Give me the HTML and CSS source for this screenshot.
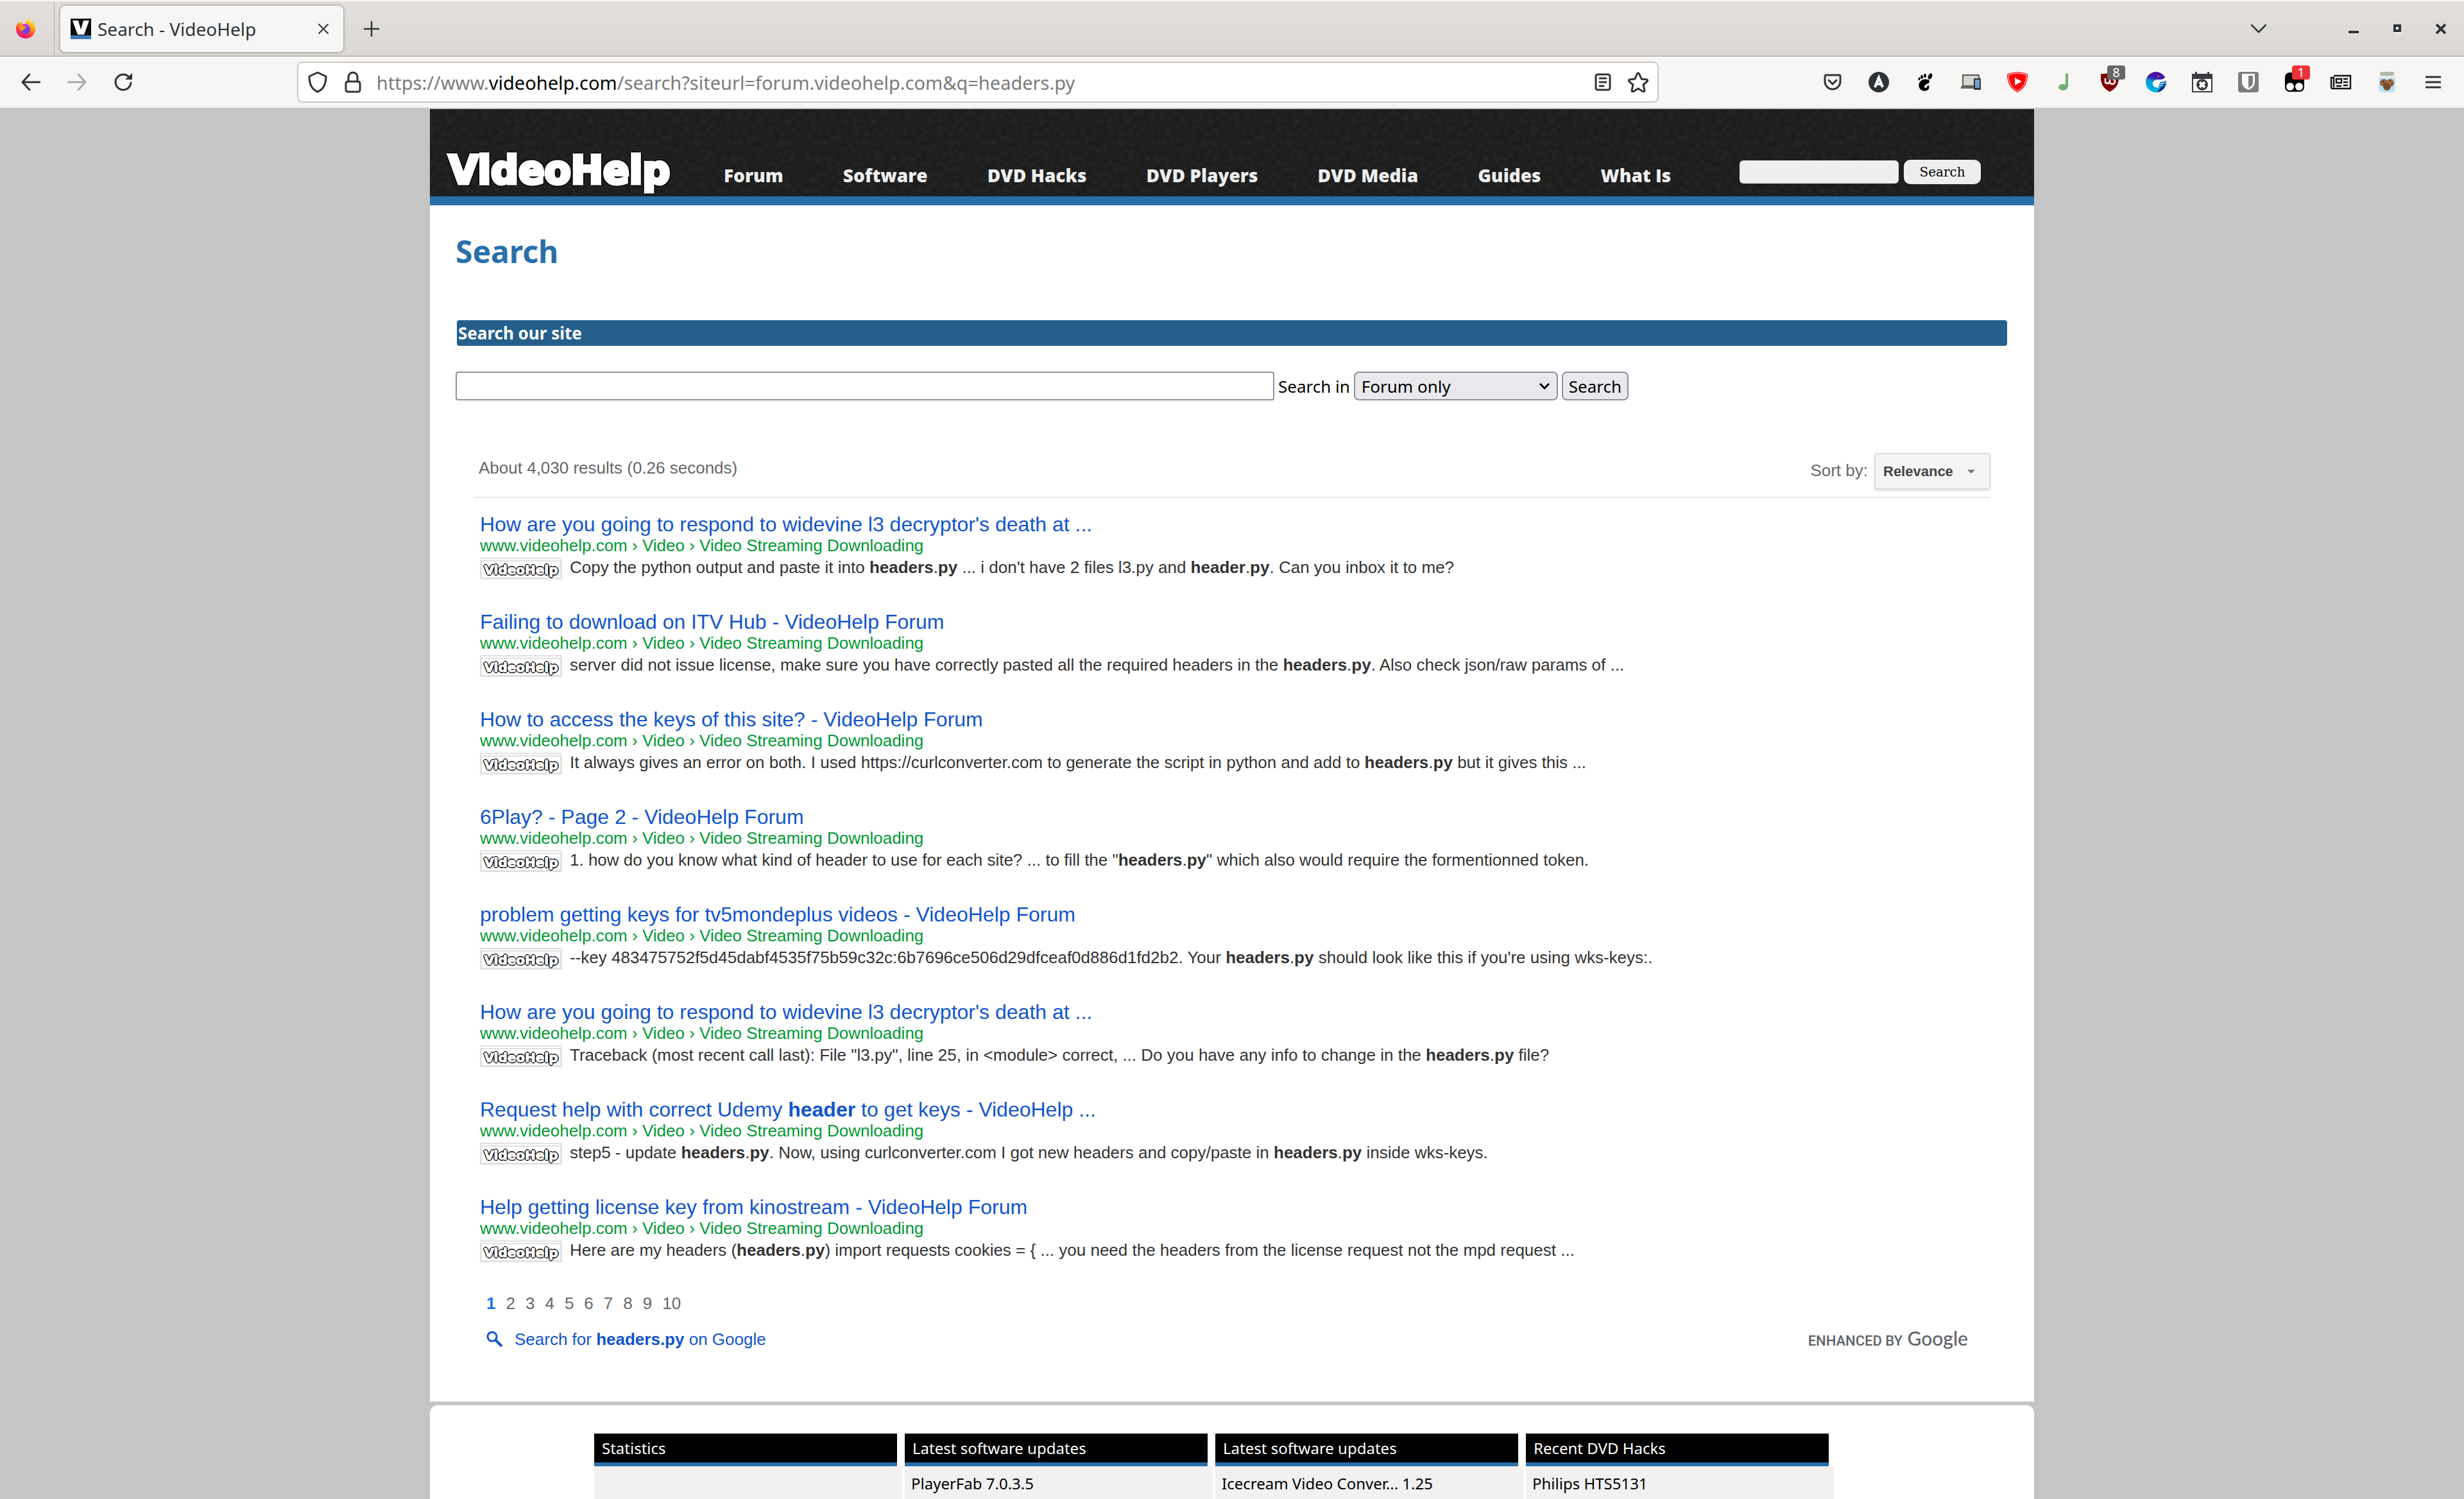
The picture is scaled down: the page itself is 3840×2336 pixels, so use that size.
FILE: index.html
```html
<!DOCTYPE html>
<html lang="en">
<head>
    <meta charset="UTF-8">
    <meta name="viewport" content="width=device-width, initial-scale=1">
    <title>Search - VideoHelp</title>
    <link rel="stylesheet" href="styles.css">
</head>
<body>
    <!-- Browser -->
    <div class="tabbar">
        <button class="pinned" aria-label="Firefox View">
            <svg width="32" height="32" viewBox="0 0 32 32">
                <defs>
                    <linearGradient id="fox" x1="0.8" y1="0" x2="0.3" y2="1">
                        <stop offset="0" stop-color="#fff44f"/>
                        <stop offset="0.4" stop-color="#ff980e"/>
                        <stop offset="0.7" stop-color="#ff3647"/>
                        <stop offset="1" stop-color="#e31587"/>
                    </linearGradient>
                </defs>
                <path fill="url(#fox)" d="M20 0c3 2 5 4 5 7 1-1 1-2 1-3 3 3 5 8 5 12 0 9-7 15-15 15S1 25 1 16c0-4 1-7 3-9l1-2 2 3 3-3c0 2 1 3 2 4l4-1c0-4 2-6 4-8z"/>
                <circle cx="16" cy="17" r="7" fill="#7542e5"/>
                <path fill="#c23bf0" d="M12 9c4-2 9 0 10 4-3-1-5 0-7 1-2 0-3-3-3-5z"/>
                <path fill="#ff9a1f" d="M5 12c3-3 6-1 9 1 2 0 3 0 3 1-1 2-4 1-5 4-1 2-3 1-4 0-2-2-3-4-3-6z"/>
            </svg>
        </button>
        <div class="tab">
            <svg width="32" height="32" viewBox="0 0 32 32">
                <path fill="#0c0c0c" d="M0 0h32v26H0z"/>
                <path fill="#3d7ab5" d="M0 26h32v6H0z"/>
                <path fill="#fff" d="M3 3h9l4 14 4-14h9l-8 22H11z"/>
            </svg>
            <span class="tab-title">Search - VideoHelp</span>
            <button class="tab-close" aria-label="Close tab">
                <svg width="16" height="16" viewBox="0 0 16 16"><path class="line thin" d="M1 1l14 14M15 1L1 15"/></svg>
            </button>
        </div>
        <button class="new-tab" aria-label="New tab">
            <svg width="24" height="24" viewBox="0 0 24 24"><path class="line" d="M12 0v24M0 12h24"/></svg>
        </button>
        <div class="window-controls">
            <button class="all-tabs" aria-label="List all tabs">
                <svg width="24" height="14" viewBox="0 0 24 14"><path class="line" d="M1 1l11 11L23 1"/></svg>
            </button>
            <button aria-label="Minimize">
                <svg width="16" height="16" viewBox="0 0 16 16"><path fill="#fff" d="M0 14h16v2H0z"/><path fill="#2e3436" d="M0 11h16v4H0z"/></svg>
            </button>
            <button aria-label="Maximize">
                <svg width="12" height="14" viewBox="0 0 12 14"><path fill="#fff" d="M0 2h12v12H0z"/><path fill="#2e3436" d="M0 0h12v12H0z"/><path fill="#fff" d="M4 4h4v4H4z"/></svg>
            </button>
            <button aria-label="Close">
                <svg width="16" height="16" viewBox="0 0 16 16"><path stroke="#2e3436" stroke-width="4" d="M1 1l14 14M15 1L1 15"/></svg>
            </button>
        </div>
    </div>

    <div class="toolbar">
        <button aria-label="Back">
            <svg width="30" height="26" viewBox="0 0 30 26"><path class="line wide" d="M13 1L2 13l11 12M2 13h27"/></svg>
        </button>
        <button class="disabled" aria-label="Forward" disabled>
            <svg width="30" height="26" viewBox="0 0 30 26"><path class="line wide" d="M17 1l11 12-11 12M28 13H1"/></svg>
        </button>
        <button aria-label="Reload">
            <svg width="30" height="30" viewBox="0 0 30 30"><path class="line wide" d="M27 16a12 12 0 1 1-4-10"/><path fill="#2e3436" d="M29 1v10H18z"/></svg>
        </button>
        <span class="spacer"></span>
        <div class="urlbar">
            <svg width="32" height="34" viewBox="0 0 32 34"><path class="line wide" d="M16 2l13 6c0 10-3 20-13 24C6 28 3 18 3 8z"/></svg>
            <svg class="lock" width="26" height="34" viewBox="0 0 26 34"><rect class="line wide" x="2" y="16" width="22" height="16" rx="3"/><path class="line wide" d="M6 16V9a7 7 0 0 1 14 0v7"/></svg>
            <div class="url" role="textbox" aria-label="Address" contenteditable="true" spellcheck="false">https://www.<b>videohelp.com</b>/search?siteurl=forum.videohelp.com&amp;q=headers.py</div>
            <svg width="26" height="28" viewBox="0 0 26 28"><rect class="line wide" x="2" y="2" width="22" height="24" rx="3"/><path class="line wide" d="M8 8h10M8 14h10M8 20h6"/></svg>
            <svg class="star" width="32" height="32" viewBox="0 0 32 32"><path class="line wide" d="M16 2c1 0 2 1 2 2l3 7 8 1c2 0 2 2 1 3l-6 5 2 9c0 2-1 2-2 2l-8-5-8 5c-1 0-2 0-2-2l2-9-6-5c-1-1-1-3 1-3l8-1 3-7c0-1 1-2 2-2z"/></svg>
        </div>
        <span class="spacer"></span>
        <button aria-label="Save to Pocket">
            <svg width="28" height="26" viewBox="0 0 28 26"><path class="line wide" d="M4 2h20q2 0 2 2v8a12 12 0 0 1-24 0V4q0-2 2-2zM8 10l6 6 6-6"/></svg>
        </button>
        <button aria-label="Account">
            <svg width="32" height="32" viewBox="0 0 32 32"><circle cx="16" cy="16" r="16" fill="#2e3436"/><path fill="none" stroke="#fff" stroke-width="4" d="M10 24l6-15 6 15M12 19h8"/></svg>
        </button>
        <button aria-label="GNOME Shell integration">
            <svg width="24" height="28" viewBox="0 0 24 28">
                <ellipse cx="20" cy="5" rx="3" ry="5" transform="rotate(25 20 5)"/>
                <ellipse cx="12" cy="4" rx="2" ry="3"/><ellipse cx="7" cy="6" rx="2" ry="3"/><ellipse cx="3" cy="9" rx="1.6" ry="2.4"/>
                <path d="M19 12c-2-3-8-3-12-1-5 3-6 9-3 13 3 5 12 5 14 0 1-3 0-5-1-5-2 0-1 4-4 4-2 0-3-2-1-4s8-3 7-7z"/>
            </svg>
        </button>
        <button aria-label="Responsive view">
            <svg width="32" height="24" viewBox="0 0 32 24"><path fill="#555753" d="M2 0h27v18h-4v4H0v-3l2-1z"/><path fill="#d3d7cf" d="M4 2h23v15H4z"/><path fill="#888a85" d="M2 19h18v1H2z"/><rect x="20" y="6" width="11" height="18" rx="1" fill="#2e3436"/><path fill="#729fcf" d="M22 8h7v13h-7z"/></svg>
        </button>
        <button aria-label="YouTube blocker">
            <svg width="32" height="32" viewBox="0 0 32 32"><path fill="#f00" d="M0 4C10-1 22-1 32 4c0 13-5 22-16 28C5 26 0 17 0 4z"/><path fill="none" stroke="#fff" stroke-width="1" d="M2 5C11 1 21 1 30 5c0 11-4 19-14 25C6 24 2 16 2 5z"/><path fill="#fff" d="M12 9l11 6-11 6z"/></svg>
        </button>
        <button aria-label="Music">
            <svg width="16" height="28" viewBox="0 0 16 28"><ellipse cx="7" cy="22" rx="7" ry="5" fill="#73b06f"/><path fill="#73b06f" d="M11 2q0-2 2-2t2 2v20h-4z"/></svg>
        </button>
        <button class="with-badge" aria-label="uBlock Origin">
            <svg width="28" height="30" viewBox="0 0 28 30"><path fill="#800000" d="M14 0c5 2 9 2 14 2 1 15-3 22-14 28C3 24-1 17 0 2c5 0 9 0 14-2z"/><path fill="none" stroke="#fff" stroke-width="2.6" d="M7 9v5q0 3 3 3t4-3V9v5a4 4 0 1 0 4-4"/></svg>
            <span class="badge">8</span>
        </button>
        <button aria-label="Translator">
            <svg width="32" height="32" viewBox="0 0 32 32">
                <defs><linearGradient id="wave" x1="0.6" y1="0" x2="0.4" y2="1"><stop offset="0" stop-color="#5a0a9a"/><stop offset="0.3" stop-color="#3a1fa8"/><stop offset="0.5" stop-color="#0a9fd0"/><stop offset="1" stop-color="#00b5e8"/></linearGradient></defs>
                <circle cx="16" cy="16" r="16" fill="url(#wave)"/>
                <path fill="#062a7a" d="M32 14c0 9-6 17-15 18 3-3 6-6 8-10z"/>
                <path fill="#f7f6f5" d="M11 20c-1-5 3-8 8-8 4 0 6 0 8-1l6-4v6c-1 4-4 7-8 9-3 3-6 3-9 2-3 0-4-2-5-4z"/>
                <path fill="none" stroke="#0b78c4" stroke-width="2" d="M32 14c-3 3-7 3-10 3M30 18c-3 2-6 2-9 2M28 22c-3 1-6 1-8 1"/>
                <circle cx="20" cy="7" r="1" fill="#d8c46a"/>
            </svg>
        </button>
        <button aria-label="Tab scheduler">
            <svg width="32" height="32" viewBox="0 0 32 32"><path fill="#3b3b3f" d="M0 3h5V0h3v3h16V0h3v3h5v29H0z"/><path fill="#fff" d="M2 11h28v19H2z"/><circle cx="16" cy="20" r="9" fill="#3b3b3f"/><path stroke="#fff" stroke-width="4" d="M12 16l8 8M20 16l-8 8"/></svg>
        </button>
        <button aria-label="Bitwarden">
            <svg width="32" height="32" viewBox="0 0 32 32"><rect width="32" height="32" rx="4" fill="#7d7d7d"/><path fill="#fff" d="M6 3h20v13c0 6-5 10-10 12-5-2-10-6-10-12z"/><path fill="#7d7d7d" d="M16 6h7v10c0 5-3 7-7 9z"/></svg>
        </button>
        <button class="with-badge" aria-label="Tampermonkey">
            <svg width="30" height="30" viewBox="0 0 30 30"><rect width="30" height="30" rx="7"/><circle cx="8" cy="22" r="6" fill="#fff"/><circle cx="22" cy="22" r="6" fill="#fff"/></svg>
            <span class="badge red">1</span>
        </button>
        <button aria-label="Reader">
            <svg width="34" height="24" viewBox="0 0 34 24"><path fill="none" stroke="#111" stroke-width="2.4" d="M6 2h26v20H4q-2 0-2-2V5h4v15M10 7h8v6h-8zM21 7h7M21 12h7M10 18h8M21 17h7"/></svg>
        </button>
        <button aria-label="Cookie manager">
            <svg width="28" height="32" viewBox="0 0 28 32"><rect x="1" y="6" width="26" height="26" rx="6" fill="#b9e3f2"/><rect x="3" y="0" width="22" height="6" rx="2" fill="#b4b9a9"/><path fill="#e3eeee" d="M4 6h20v4H4z"/><circle cx="9" cy="17" r="6" fill="#94613f"/><circle cx="19" cy="17" r="6" fill="#a06c47"/><circle cx="14" cy="23" r="6" fill="#80502f"/><path fill="#4e2c18" d="M7 14h2v2H7zM18 13h2v2h-2zM21 18h2v2h-2zM13 23h2v2h-2zM10 18h2v2h-2z"/></svg>
        </button>
        <button aria-label="Open menu">
            <svg width="24" height="20" viewBox="0 0 24 20"><path class="line wide" d="M1 2h22M1 10h22M1 18h22"/></svg>
        </button>
    </div>

    <!-- Site -->
    <header class="site-header">
        <a class="logo" href="#">VideoHelp</a>
        <nav class="site-nav">
            <a href="#">Forum</a>
            <a href="#">Software</a>
            <a href="#">DVD Hacks</a>
            <a href="#">DVD Players</a>
            <a href="#">DVD Media</a>
            <a href="#">Guides</a>
            <a href="#">What Is</a>
        </nav>
        <form class="header-search">
            <input type="text" aria-label="Search VideoHelp">
            <button type="button">Search</button>
        </form>
    </header>

    <main class="page">
        <h1>Search</h1>
        <h2>Search our site</h2>
        <form class="search-form">
            <input type="text" aria-label="Search terms">
            <label for="area">Search in</label>
            <span class="select-wrap">
                <select id="area">
                    <option>Forum only</option>
                    <option>Software only</option>
                </select>
                <svg width="16" height="10" viewBox="0 0 16 10"><path fill="none" stroke="#000" stroke-width="3" d="M1 1l7 7 7-7"/></svg>
            </span>
            <button type="button">Search</button>
        </form>

        <section class="results">
            <div class="results-info">
                <span class="count">About 4,030 results (0.26 seconds)</span>
                <span class="sort-label" id="sortLabel">Sort by:</span>
                <button class="sort" aria-describedby="sortLabel">Relevance <svg width="12" height="6" viewBox="0 0 12 6"><path fill="#777" d="M0 0h12L6 6z"/></svg></button>
            </div>
            <div class="result-list">
                <article>
                    <h3><a href="#">How are you going to respond to widevine l3 decryptor's death at ...</a></h3>
                    <p class="crumb">www.videohelp.com › Video › Video Streaming Downloading</p>
                    <div class="snippet"><span class="thumb">VideoHelp</span><p>Copy the python output and paste it into <b>headers</b>.<b>py</b> ... i don't have 2 files l3.py and <b>header</b>.<b>py</b>. Can you inbox it to me?</p></div>
                </article>
                <article>
                    <h3><a href="#">Failing to download on ITV Hub - VideoHelp Forum</a></h3>
                    <p class="crumb">www.videohelp.com › Video › Video Streaming Downloading</p>
                    <div class="snippet"><span class="thumb">VideoHelp</span><p>server did not issue license, make sure you have correctly pasted all the required headers in the <b>headers</b>.<b>py</b>. Also check json/raw params of ...</p></div>
                </article>
                <article>
                    <h3><a href="#">How to access the keys of this site? - VideoHelp Forum</a></h3>
                    <p class="crumb">www.videohelp.com › Video › Video Streaming Downloading</p>
                    <div class="snippet"><span class="thumb">VideoHelp</span><p>It always gives an error on both. I used https://curlconverter.com to generate the script in python and add to <b>headers</b>.<b>py</b> but it gives this ...</p></div>
                </article>
                <article>
                    <h3><a href="#">6Play? - Page 2 - VideoHelp Forum</a></h3>
                    <p class="crumb">www.videohelp.com › Video › Video Streaming Downloading</p>
                    <div class="snippet"><span class="thumb">VideoHelp</span><p>1. how do you know what kind of header to use for each site? ... to fill the "<b>headers</b>.<b>py</b>" which also would require the formentionned token.</p></div>
                </article>
                <article>
                    <h3><a href="#">problem getting keys for tv5mondeplus videos - VideoHelp Forum</a></h3>
                    <p class="crumb">www.videohelp.com › Video › Video Streaming Downloading</p>
                    <div class="snippet"><span class="thumb">VideoHelp</span><p>--key 483475752f5d45dabf4535f75b59c32c:6b7696ce506d29dfceaf0d886d1fd2b2. Your <b>headers</b>.<b>py</b> should look like this if you're using wks-keys:.</p></div>
                </article>
                <article>
                    <h3><a href="#">How are you going to respond to widevine l3 decryptor's death at ...</a></h3>
                    <p class="crumb">www.videohelp.com › Video › Video Streaming Downloading</p>
                    <div class="snippet"><span class="thumb">VideoHelp</span><p>Traceback (most recent call last): File "l3.py", line 25, in &lt;module&gt; correct, ... Do you have any info to change in the <b>headers</b>.<b>py</b> file?</p></div>
                </article>
                <article>
                    <h3><a href="#">Request help with correct Udemy <b>header</b> to get keys - VideoHelp ...</a></h3>
                    <p class="crumb">www.videohelp.com › Video › Video Streaming Downloading</p>
                    <div class="snippet"><span class="thumb">VideoHelp</span><p>step5 - update <b>headers</b>.<b>py</b>. Now, using curlconverter.com I got new headers and copy/paste in <b>headers</b>.<b>py</b> inside wks-keys.</p></div>
                </article>
                <article>
                    <h3><a href="#">Help getting license key from kinostream - VideoHelp Forum</a></h3>
                    <p class="crumb">www.videohelp.com › Video › Video Streaming Downloading</p>
                    <div class="snippet"><span class="thumb">VideoHelp</span><p>Here are my headers (<b>headers</b>.<b>py</b>) import requests cookies = { ... you need the headers from the license request not the mpd request ...</p></div>
                </article>
            </div>
            <nav class="pages" aria-label="Result pages">
                <a class="current" href="#">1</a>
                <a href="#">2</a>
                <a href="#">3</a>
                <a href="#">4</a>
                <a href="#">5</a>
                <a href="#">6</a>
                <a href="#">7</a>
                <a href="#">8</a>
                <a href="#">9</a>
                <a href="#">10</a>
            </nav>
            <div class="google-row">
                <a href="#">
                    <svg width="26" height="26" viewBox="0 0 26 26"><circle cx="9" cy="9" r="7" fill="none" stroke="#1155cc" stroke-width="3"/><path stroke="#1155cc" stroke-width="4" d="M14 14l10 10"/></svg>
                    <span>Search for <b>headers.py</b> on Google</span>
                </a>
                <span class="enhanced">ENHANCED BY <span class="google">Google</span></span>
            </div>
        </section>
    </main>

    <footer class="site-footer">
        <section>
            <h4>Statistics</h4>
            <div class="box"></div>
        </section>
        <section>
            <h4>Latest software updates</h4>
            <div class="box"><a href="#">PlayerFab 7.0.3.5</a></div>
        </section>
        <section>
            <h4>Latest software updates</h4>
            <div class="box"><a href="#">Icecream Video Conver... 1.25</a></div>
        </section>
        <section>
            <h4>Recent DVD Hacks</h4>
            <div class="box"><a href="#">Philips HTS5131</a></div>
        </section>
    </footer>
</body>
</html>
```
FILE: styles.css
```css
* {
    box-sizing: border-box;
}
body {
    margin: 0;
    min-height: 100vh;
    display: flex;
    flex-direction: column;
    background: #c4c6c5;
    color: #000;
    font-family: "Noto Sans", "Open Sans", sans-serif;
    font-size: 26px;
}
h1, h2, h3, h4, p {
    margin: 0;
}
a {
    text-decoration: none;
    color: inherit;
}
button, input, select {
    font: inherit;
    color: inherit;
    margin: 0;
}
svg {
    display: block;
    flex: none;
}
.line {
    fill: none;
    stroke: #2e3436;
    stroke-width: 2.5;
    stroke-linecap: round;
    stroke-linejoin: round;
}
.thin {
    stroke-width: 2;
}
.wide {
    stroke-width: 3;
}

/* Browser */
.tabbar {
    display: flex;
    align-items: center;
    height: 88px;
    border-top: 2px solid #f7f6f5;
    border-bottom: 1px solid #979694;
    background: linear-gradient(#e3dfdc, #dcd8d4);
    font-size: 28px;
}
.tabbar button, .toolbar button {
    display: flex;
    align-items: center;
    justify-content: center;
    border: 0;
    padding: 0;
    background: none;
}
.tabbar .pinned {
    align-self: stretch;
    width: 85px;
    padding-right: 4px;
    border-right: 1px solid #b3b0ad;
}
.tab {
    display: flex;
    align-items: center;
    width: 441px;
    height: 72px;
    margin-left: 9px;
    padding: 0 16px;
    border-radius: 8px;
    background: #f6f6f6;
    box-shadow: 0 0 5px rgba(0, 0, 0, 0.4);
    color: #2e3436;
}
.tab-title {
    flex: 1;
    margin-left: 10px;
}
.tabbar .tab-close {
    width: 30px;
    height: 32px;
}
.tabbar .new-tab {
    width: 72px;
    height: 72px;
    margin-left: 8px;
}
.window-controls {
    display: flex;
    margin-left: auto;
    padding-right: 2px;
}
.window-controls button {
    width: 68px;
    height: 68px;
}
.window-controls .all-tabs {
    margin-right: 80px;
}
.toolbar {
    display: flex;
    align-items: center;
    height: 82px;
    padding: 0 12px;
    border-bottom: 2px solid #cdc7c2;
    background: #f7f6f5;
}
.toolbar button {
    width: 72px;
    height: 72px;
}
.toolbar .disabled {
    opacity: 0.4;
}
.toolbar .with-badge {
    position: relative;
}
.badge {
    position: absolute;
    top: 10px;
    left: 32px;
    width: 28px;
    height: 22px;
    border-radius: 4px;
    background: #666;
    color: #fff;
    font-size: 20px;
    line-height: 22px;
    text-align: center;
}
.badge.red {
    background: #ee3338;
}
.spacer {
    flex: 10;
}
.urlbar {
    display: flex;
    align-items: center;
    flex: 89;
    height: 64px;
    padding: 0 14px;
    border: 2px solid #cdc7c2;
    border-radius: 8px;
    background: #fff;
    color: #7b7b7b;
    font-size: 29px;
}
.lock {
    margin-left: 26px;
}
.url {
    flex: 1;
    margin-left: 24px;
    white-space: nowrap;
    outline: none;
}
.url b {
    color: #000;
    font-weight: 400;
}
.star {
    margin-left: 26px;
}

/* Header */
.site-header, .page, .site-footer {
    width: 100%;
    max-width: 2500px;
    margin: 0 auto;
}
.site-header {
    display: flex;
    align-items: center;
    height: 150px;
    padding: 60px 83px 0 29px;
    border-bottom: 14px solid #2a6faa;
    background: #1c1c1c url("data:image/svg+xml,%3Csvg xmlns='http://www.w3.org/2000/svg' width='132' height='132'%3E%3Cfilter id='n' x='0' y='0' width='1' height='1'%3E%3CfeTurbulence type='fractalNoise' baseFrequency='.12' numOctaves='2' stitchTiles='stitch'/%3E%3CfeColorMatrix values='0 0 0 0 1 0 0 0 0 1 0 0 0 0 1 .08 0 0 0 -.025'/%3E%3C/filter%3E%3Crect width='132' height='132' filter='url(%23n)'/%3E%3C/svg%3E");
}
.logo, .thumb {
    color: #fff;
    font-family: "DejaVu Sans", sans-serif;
    font-weight: 700;
    white-space: nowrap;
}
.logo {
    width: 366px;
    padding-bottom: 6px;
    font-size: 60px;
    line-height: 64px;
    -webkit-text-stroke: 5px #fff;
    text-shadow: 4px 0 #000, -4px 0 #000, 0 4px #000, 0 -4px #000, 3px 3px #000, -3px 3px #000, 3px -3px #000, -3px -3px #000;
}
.site-nav {
    display: flex;
    gap: 93px;
    margin-left: 63px;
    padding-top: 10px;
    color: #eee;
    font-family: "Open Sans", sans-serif;
    font-size: 28px;
    font-weight: 800;
    line-height: 38px;
    white-space: nowrap;
}
.header-search {
    display: flex;
    align-items: center;
    gap: 8px;
    margin-left: auto;
}
.header-search input {
    width: 248px;
    height: 36px;
    border: 0;
    border-radius: 6px;
    background: #eee;
}
.header-search button {
    width: 120px;
    height: 38px;
    padding: 0;
    border: 0;
    border-radius: 10px;
    background: #eee;
    font-family: "DejaVu Serif", serif;
    font-size: 20px;
}

/* Search page */
.page {
    padding: 40px 42px 77px 40px;
    background: #fff;
}
h1 {
    color: #2a6faa;
    font-size: 48px;
    line-height: 64px;
}
h2 {
    margin: 75px 0 40px 2px;
    padding: 0 2px;
    border-radius: 4px;
    background: #245f8b;
    color: #fff;
    font-size: 26px;
    line-height: 40px;
}
.search-form {
    display: flex;
    align-items: center;
    gap: 6px;
}
.search-form input, .search-form select, .search-form button {
    height: 45px;
    border: 2px solid #8f8f9d;
    border-radius: 4px;
}
.search-form input {
    width: 1276px;
    background: #fff;
}
.search-form select, .search-form button {
    border-radius: 8px;
    background: #e9e9ed;
}
.search-form button {
    padding: 0 9px;
}
.select-wrap {
    position: relative;
}
.search-form select {
    display: block;
    width: 318px;
    padding: 0 10px;
    appearance: none;
}
.select-wrap svg {
    position: absolute;
    right: 13px;
    top: 18px;
    pointer-events: none;
}
.results {
    margin: 82px 26px 0 28px;
    font-family: "Liberation Sans", Arial, sans-serif;
}
.results-info {
    display: flex;
    align-items: flex-start;
    padding: 0 0 11px 8px;
    border-bottom: 2px solid #e9e9e9;
    color: #676767;
}
.count {
    flex: 1;
    line-height: 46px;
}
.sort-label {
    margin-right: 10px;
    line-height: 54px;
}
.sort {
    display: flex;
    align-items: center;
    justify-content: space-between;
    width: 181px;
    height: 57px;
    padding: 0 22px 0 12px;
    border: 2px solid #dcdcdc;
    border-radius: 3px;
    background: #f5f5f5;
    box-shadow: 0 2px 3px rgba(0, 0, 0, 0.12);
    color: #444;
    font-size: 22px;
    font-weight: 700;
}
.result-list {
    display: flex;
    flex-direction: column;
    gap: 48px;
    padding: 23px 10px 0;
}
h3 {
    color: #1155cc;
    font-size: 32px;
    font-weight: 400;
    line-height: 36px;
}
.crumb {
    color: #009933;
    line-height: 30px;
}
.snippet {
    display: flex;
    align-items: flex-end;
    gap: 12px;
    color: #333;
    line-height: 38px;
}
.thumb {
    width: 128px;
    height: 34px;
    padding-top: 2px;
    border: 3px solid #e1e1e1;
    border-top: 6px double #e1e1e1;
    background: #fff;
    font-size: 20px;
    line-height: 22px;
    text-align: center;
    -webkit-text-stroke: 1px #fff;
    text-shadow: 2px 0 #000, -2px 0 #000, 0 2px #000, 0 -2px #000, 1px 1px #000, -1px 1px #000, 1px -1px #000, -1px -1px #000;
}
.pages {
    display: flex;
    gap: 16px;
    margin: 49px 0 21px 20px;
    color: #676767;
    line-height: 30px;
}
.pages .current {
    color: #1a73e8;
    font-weight: 700;
}
.google-row {
    display: flex;
    align-items: center;
    justify-content: space-between;
    padding: 0 35px 0 20px;
    line-height: 40px;
}
.google-row a {
    display: flex;
    align-items: center;
    gap: 18px;
    color: #1155cc;
}
.enhanced {
    color: #5f6368;
    font-family: Roboto, sans-serif;
    font-size: 22px;
    font-weight: 500;
    line-height: 30px;
}
.google {
    margin-left: 2px;
    font-family: Lato, sans-serif;
    font-size: 30px;
}

/* Footer */
.site-footer {
    display: grid;
    flex: 1;
    grid-template-columns: repeat(4, 480px);
    gap: 4px;
    margin-top: 6px;
    padding: 44px 0 0 256px;
    border-radius: 12px 12px 0 0;
    background: #fff;
    font-size: 24px;
}
.site-footer section {
    display: flex;
    flex-direction: column;
}
h4 {
    margin-right: 8px;
    padding-left: 12px;
    border-bottom: 6px solid #2a6faa;
    background: #000;
    color: #fff;
    font-weight: 400;
    line-height: 45px;
}
.box {
    flex: 1;
    padding: 11px 10px 0;
    background: #f1f1f1;
    line-height: 32px;
}
```
